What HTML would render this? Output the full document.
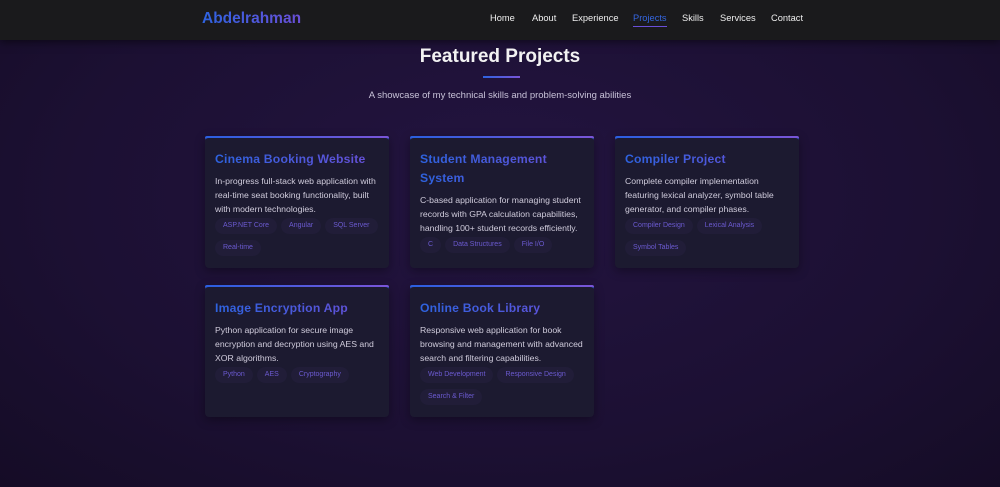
<!DOCTYPE html>
<html><head><meta charset="utf-8"><style>
*{margin:0;padding:0;box-sizing:border-box}
body{width:1000px;height:487px;overflow:hidden;font-family:"Liberation Sans",sans-serif;background:radial-gradient(ellipse at 50% 40%,#231440 0%,#1c1033 60%,#150c26 100%);position:relative}
.nav{position:absolute;top:0;left:0;width:1000px;height:40px;background:#1a1a1c;box-shadow:0 2px 8px rgba(0,0,0,.5)}
.logo{position:absolute;left:202px;top:10px;font-size:15.5px;font-weight:bold;background:linear-gradient(90deg,#2e63e0,#6a4fd8);-webkit-background-clip:text;color:transparent}
.nav a{position:absolute;top:13px;font-size:9.3px;color:#eee;text-decoration:none}
.nav a.act{color:#3566e0;border-bottom:1px solid #6a4fd8;padding-bottom:3px}
h1{position:absolute;top:46px;left:0;width:1000px;text-align:center;color:#f2f2f2;font-size:19px}
.bar{position:absolute;left:483px;top:76px;width:37px;height:2px;background:linear-gradient(90deg,#2e63e0,#7a55d8)}
.sub{position:absolute;top:90px;left:0;width:1000px;text-align:center;color:#c8c2d8;font-size:9.5px}
.card{position:absolute;width:184px;height:132px;background:#1c1a30;border-radius:4px;border-top:2px solid #3a5fe0;padding:12px 10px;box-shadow:0 3px 10px rgba(0,0,0,.35)}
.card:before{content:"";position:absolute;top:-2px;left:0;right:0;height:2px;border-radius:4px 4px 0 0;background:linear-gradient(90deg,#2a5fe0,#7a55d8)}
.card h3{font-size:12.2px;letter-spacing:.2px;line-height:19px;background:linear-gradient(90deg,#2e63e0,#6a4fd8);-webkit-background-clip:text;color:transparent;margin-bottom:5px}
.card p{font-size:8.7px;line-height:14px;color:#d0ccdc}
.tags{margin-top:2px;display:flex;flex-wrap:wrap;gap:6px 4px}
.tags span{font-size:7px;color:#6b5ad0;background:#211d38;border-radius:9px;padding:4px 8px;line-height:8px}
</style></head><body>
<div class="nav"><div class="logo">Abdelrahman</div>
<a style="left:490px">Home</a><a style="left:532px">About</a><a style="left:572px">Experience</a><a class="act" style="left:633px">Projects</a><a style="left:682px">Skills</a><a style="left:720px">Services</a><a style="left:771px">Contact</a></div>
<h1>Featured Projects</h1><div class="bar"></div>
<div class="sub">A showcase of my technical skills and problem-solving abilities</div>

<div class="card" style="left:205px;top:136px"><h3>Cinema Booking Website</h3><p>In-progress full-stack web application with real-time seat booking functionality, built with modern technologies.</p><div class="tags"><span>ASP.NET Core</span><span>Angular</span><span>SQL Server</span><span>Real-time</span></div></div>
<div class="card" style="left:410px;top:136px"><h3>Student Management System</h3><p>C-based application for managing student records with GPA calculation capabilities, handling 100+ student records efficiently.</p><div class="tags"><span>C</span><span>Data Structures</span><span>File I/O</span></div></div>
<div class="card" style="left:615px;top:136px"><h3>Compiler Project</h3><p>Complete compiler implementation featuring lexical analyzer, symbol table generator, and compiler phases.</p><div class="tags"><span>Compiler Design</span><span>Lexical Analysis</span><span>Symbol Tables</span></div></div>
<div class="card" style="left:205px;top:285px"><h3>Image Encryption App</h3><p>Python application for secure image encryption and decryption using AES and XOR algorithms.</p><div class="tags"><span>Python</span><span>AES</span><span>Cryptography</span></div></div>
<div class="card" style="left:410px;top:285px"><h3>Online Book Library</h3><p>Responsive web application for book browsing and management with advanced search and filtering capabilities.</p><div class="tags"><span>Web Development</span><span>Responsive Design</span><span>Search &amp; Filter</span></div></div>
</body></html>
